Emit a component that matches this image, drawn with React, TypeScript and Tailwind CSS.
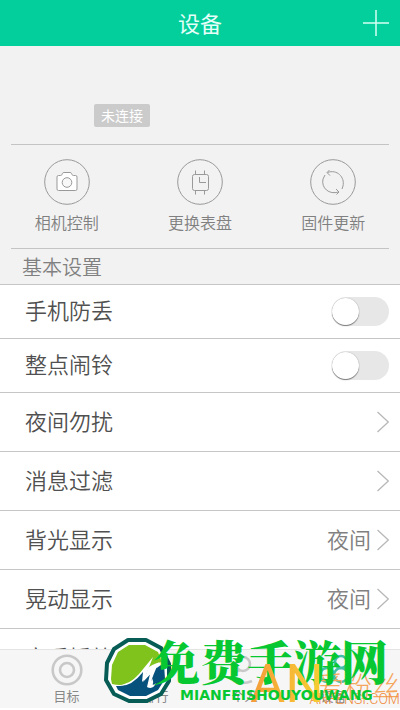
import React from "react";

const line = { fill: "none", stroke: "#999", strokeWidth: 1 } as const;

function CameraIcon() {
  return (
    <svg viewBox="0 0 46 46" className="size-[46px]" {...line}>
      <circle cx="23" cy="23" r="22.3" />
      <path fill="#fff" d="M14.5 16.5h2q1.3 0 1.6-1.2l.3-.7q.3-1.1 1.5-1.1h6.2q1.2 0 1.5 1.1l.3.7q.3 1.2 1.6 1.2h2q1.5 0 1.5 1.5v12q0 1.5-1.5 1.5h-17q-1.5 0-1.5-1.5V18q0-1.5 1.5-1.5z" />
      <circle cx="23" cy="23.5" r="4.8" fill="#f8f8f8" />
    </svg>
  );
}

function WatchIcon() {
  return (
    <svg viewBox="0 0 46 46" className="size-[46px]" {...line}>
      <circle cx="23" cy="23" r="22.3" />
      <rect x="15.5" y="15.5" width="16" height="16" rx="2" />
      <path d="M18.5 15.5v-4M27.5 15.5v-4M18.5 31.5v4M27.5 31.5v4M22.5 18v5.5H29" />
    </svg>
  );
}

function UpdateIcon() {
  return (
    <svg viewBox="0 0 46 46" className="size-[46px]" {...line}>
      <circle cx="23" cy="23" r="22.3" />
      <path d="M17.5 13.5C27 10 35 18 33 27l-1 3M28.5 33C19 36 11 29 13 20l2-4M19.5 11L17 13.6l3 3M26 30l3 3-2.500 2.500" />
    </svg>
  );
}

const actions = [
  { label: "相机控制", Icon: CameraIcon },
  { label: "更换表盘", Icon: WatchIcon },
  { label: "固件更新", Icon: UpdateIcon },
];

const switches = ["手机防丢", "整点闹铃"];

const links = [
  { label: "夜间勿扰", value: "" },
  { label: "消息过滤", value: "" },
  { label: "背光显示", value: "夜间" },
  { label: "晃动显示", value: "夜间" },
  { label: "音乐播放", value: "" },
];

const tabs = [
  {
    label: "目标",
    icon: (
      <svg viewBox="0 0 32 32" className="size-8" fill="none" stroke="#c8c8c8" strokeWidth="2.6">
        <circle cx="16" cy="16" r="14.3" />
        <circle cx="16" cy="16" r="7" />
      </svg>
    ),
  },
  {
    label: "排行",
    icon: (
      <svg viewBox="0 0 32 32" className="size-8" fill="none" stroke="#c8c8c8" strokeWidth="2.6">
        <path d="M6 28V16M16 28V6M26 28V12" />
      </svg>
    ),
  },
  {
    label: "个人",
    icon: (
      <svg viewBox="0 0 32 32" className="size-8" fill="none" stroke="#c8c8c8" strokeWidth="2.6">
        <circle cx="14" cy="10" r="7" />
        <path d="M11 16C5 18 3 22 5 27q9 4 18 0" />
      </svg>
    ),
  },
  {
    label: "设备",
    icon: (
      <svg viewBox="0 0 32 32" className="size-8" fill="none" stroke="#42bfa6" strokeWidth="2.6">
        <circle cx="23" cy="8" r="6" />
        <circle cx="9" cy="21" r="7" />
        <circle cx="23" cy="21" r="7" />
      </svg>
    ),
  },
];

function Watermarks() {
  return (
    <div className="pointer-events-none absolute inset-x-0 bottom-0 h-[76px]">
      <div className="absolute top-[36px] right-0 text-[28px] leading-[30px] font-light whitespace-nowrap text-[#f5a65c]">爱粉丝</div>
      <div className="absolute top-[57px] right-0 font-['Roboto',sans-serif] text-[14px] leading-[16px] font-light text-[#f08c3c]">ANFENSI.COM</div>
      <svg viewBox="0 0 68 66" className="absolute top-[4px] left-[104px] h-[66px] w-[68px]">
        <path d="M24 2L42 2L57 10L65 26L65 43L57 56L43 63L25 63L10 56L2 42L3 25L10 11Z" fill="#fff" stroke="#075c56" strokeWidth="4" strokeLinejoin="round" />
        <path d="M25 7L41 7L54 14L58 24Q48 25 39 34L28 43Q20 49 8 46L7 41L8 27L14 14Z" fill="#7fc31c" />
        <path d="M60 26L61 41L54 52L42 58L26 58L14 52L12 48Q24 49 35 37L45 28L39 44L53 29Q49 37 46 46Q52 48 47 38Q52 28 60 26Z" fill="#07527c" />
        <path d="M9 47Q24 49 35 36L49 19L42 37L55 24Q49 37 47 44Q49 49 52 45Q49 52 43 49L46 36L38 44L39 34Q25 52 9 47Z" fill="#fff" />
      </svg>
      <div className="absolute top-[2px] left-[153px] font-['Noto_Serif_CJK_SC','Noto_Sans_CJK_SC',serif] text-[47px] leading-[48px] font-black whitespace-nowrap text-[#08c832]">
        免费手游网
      </div>
      <div className="absolute top-[12px] left-[250px] bg-linear-to-r from-[#f59b3b] to-[#f6d030] bg-clip-text font-['Roboto',sans-serif] text-[54px] leading-[76px] text-transparent">
        AN
      </div>
      <div className="absolute top-[52px] left-[180px] font-['DejaVu_Sans',sans-serif] text-[14px] leading-[18px] font-bold text-[#08c832]">
        MIANFEISHOUYOUWANG
      </div>
    </div>
  );
}

export default function App() {
  return (
    <div className="relative flex h-screen flex-col overflow-hidden bg-white pb-[2px] font-['Noto_Sans_CJK_SC',sans-serif] text-[#505050]">
      <header className="grid h-[46px] shrink-0 grid-cols-[1fr_auto_1fr] items-center bg-[#03cf9d] px-[10px] text-white">
        <h1 className="col-start-2 pb-[2px] text-[22px] leading-[30px] text-[#e6fff8]">设备</h1>
        <button aria-label="添加" className="justify-self-end">
          <svg viewBox="0 0 28 28" className="size-7" stroke="#d5fff2" strokeWidth="1.5">
            <path d="M14 1v26M1 14h26" />
          </svg>
        </button>
      </header>

      <main className="flex min-h-0 flex-1 flex-col overflow-hidden">
        <section className="shrink-0 bg-[#f2f2f2] px-[11px]">
          <div className="flex h-[98px] items-end pb-[17px] pl-[83px]">
            <span className="rounded-xs bg-[#cbcbcb] px-[7px] text-[14px] leading-[23px] text-white">未连接</span>
          </div>
          <div className="relative -mx-[11px] grid grid-cols-3 pt-[15px] pb-[15px] before:absolute before:inset-x-[11px] before:top-0 before:h-px before:bg-[#c4c4c4] after:absolute after:inset-x-[11px] after:bottom-0 after:h-px after:bg-[#c4c4c4]">
            {actions.map(({ label, Icon }) => (
              <button key={label} className="flex flex-col items-center gap-[5px] text-[#808080]">
                <Icon />
                <span className="text-[16px] leading-[24px] font-[350]">{label}</span>
              </button>
            ))}
          </div>
          <h2 className="pl-[11px] text-[20px] leading-[35px] font-[350] text-[#808080]">基本设置</h2>
        </section>

        <ul className="shrink-0 border-t border-[#c6c6c6]">
          {switches.map((label) => (
            <li key={label} className="border-b border-[#c6c6c6]">
              <label className="flex h-[53px] items-center justify-between pr-[11px] pl-[25px]">
                <span className="pb-[5px] text-[22px] leading-[30px] font-[350]">{label}</span>
                <input type="checkbox" role="switch" className="peer sr-only" />
                <span className="flex h-[29px] w-[57px] items-center rounded-full bg-[#e7e7e7] peer-checked:justify-end peer-checked:bg-[#03cf9d]">
                  <span className="size-[27px] rounded-full bg-white shadow-[0_1px_1px_#777,0_0_1px_#999]" />
                </span>
              </label>
            </li>
          ))}
          {links.map(({ label, value }) => (
            <li key={label} className="border-b border-[#c6c6c6]">
              <button className="flex h-[58px] w-full items-center pr-[11px] pl-[25px] text-[22px] leading-[30px] font-[350]">
                <span className="flex-1 pb-[5px] text-left">{label}</span>
                <span className="pr-[6px] pb-[5px] text-[#808080]">{value}</span>
                <svg viewBox="0 0 12 22" className="h-[22px] w-[12px]" fill="none" stroke="#b8b8b8" strokeWidth="1.3">
                  <path d="M.5 1L11.3 11L.5 21" />
                </svg>
              </button>
            </li>
          ))}
        </ul>
      </main>

      <nav className="grid h-[59px] shrink-0 grid-cols-4 border-t border-[#e4e4e4] bg-[#f6f6f6] px-[22px]">
        {tabs.map(({ label, icon }) => (
          <button key={label} className="flex flex-col items-center pt-[4px] text-[13px] leading-[20px] text-[#888]">
            {icon}
            <span>{label}</span>
          </button>
        ))}
      </nav>
      <Watermarks />
    </div>
  );
}
